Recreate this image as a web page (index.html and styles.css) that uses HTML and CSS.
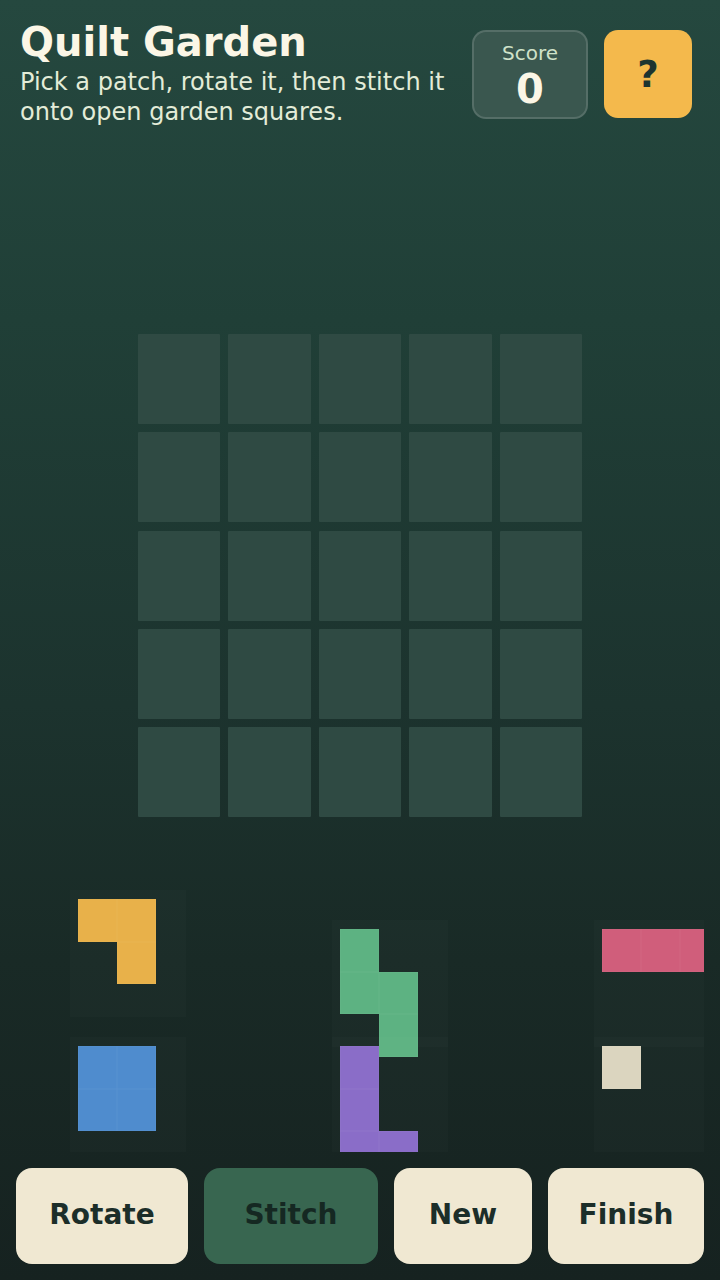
FILE: index.html
```html
<!DOCTYPE html>
<html lang="en">
<head>
<meta charset="utf-8">
<title>Quilt Garden</title>
<link rel="stylesheet" href="styles.css">
</head>
<body>
<div class="app">
  <header class="header">
    <div class="intro">
      <h1 class="title">Quilt Garden</h1>
      <p class="subtitle">Pick a patch, rotate it, then stitch it onto open garden squares.</p>
    </div>
    <div class="header-tools">
      <div class="score">
        <span class="score-label">Score</span>
        <span class="score-value">0</span>
      </div>
      <button class="help" type="button">?</button>
    </div>
  </header>

  <main class="board">
    <div class="cell"></div><div class="cell"></div><div class="cell"></div><div class="cell"></div><div class="cell"></div>
    <div class="cell"></div><div class="cell"></div><div class="cell"></div><div class="cell"></div><div class="cell"></div>
    <div class="cell"></div><div class="cell"></div><div class="cell"></div><div class="cell"></div><div class="cell"></div>
    <div class="cell"></div><div class="cell"></div><div class="cell"></div><div class="cell"></div><div class="cell"></div>
    <div class="cell"></div><div class="cell"></div><div class="cell"></div><div class="cell"></div><div class="cell"></div>
  </main>

  <section class="tray">
    <div class="tray-grid">
      <div class="slot">
        <div class="piece cols-2 yellow">
          <i class="on"></i><i class="on"></i>
          <i></i><i class="on"></i>
        </div>
      </div>
      <div class="slot slot-low">
        <div class="piece cols-2 green">
          <i class="on"></i><i></i>
          <i class="on"></i><i class="on"></i>
          <i></i><i class="on"></i>
        </div>
      </div>
      <div class="slot slot-low">
        <div class="piece cols-3 pink">
          <i class="on"></i><i class="on"></i><i class="on"></i>
        </div>
      </div>
      <div class="slot slot-short">
        <div class="piece cols-2 blue">
          <i class="on"></i><i class="on"></i>
          <i class="on"></i><i class="on"></i>
        </div>
      </div>
      <div class="slot slot-short">
        <div class="piece cols-2 purple">
          <i class="on"></i><i></i>
          <i class="on"></i><i></i>
          <i class="on"></i><i class="on"></i>
        </div>
      </div>
      <div class="slot slot-short">
        <div class="piece cols-1 cream">
          <i class="on"></i>
        </div>
      </div>
    </div>
  </section>

  <nav class="actions">
    <button class="btn" type="button">Rotate</button>
    <button class="btn btn-disabled" type="button">Stitch</button>
    <button class="btn" type="button">New</button>
    <button class="btn" type="button">Finish</button>
  </nav>
</div>
</body>
</html>
```
FILE: styles.css
```css
* { box-sizing: border-box; }

html, body {
  margin: 0;
  padding: 0;
}

body {
  width: 720px;
  height: 1280px;
  overflow: hidden;
  font-family: "DejaVu Sans", "Liberation Sans", sans-serif;
  color: #fbf5e4;
  background: linear-gradient(180deg, #25483f 0%, #203f37 25%, #1c332e 55%, #192a26 75%, #162220 100%);
}

.app {
  display: flex;
  flex-direction: column;
  height: 1280px;
}

/* Header */
.header {
  display: flex;
  justify-content: space-between;
  align-items: flex-start;
  gap: 16px;
  padding: 20px 28px 0 20px;
}

.intro {
  width: 436px;
}

.title {
  margin: 0;
  font-size: 40px;
  line-height: 44px;
  font-weight: bold;
  color: #fbf6e6;
}

.subtitle {
  margin: 3px 0 0;
  font-size: 24px;
  line-height: 30px;
  color: #e3ecd8;
}

.header-tools {
  display: flex;
  gap: 16px;
  margin-top: 10px;
}

.score {
  width: 116px;
  height: 89px;
  border: 2px solid rgba(255, 255, 255, 0.14);
  border-radius: 14px;
  background: #3a574f;
  display: flex;
  flex-direction: column;
  align-items: center;
  justify-content: center;
  padding-top: 3px;
}

.score-label {
  font-size: 20px;
  line-height: 24px;
  color: #cfe2c9;
}

.score-value {
  margin-top: 2px;
  font-size: 40px;
  line-height: 44px;
  font-weight: bold;
  color: #fbf6e6;
}

.help {
  width: 88px;
  height: 88px;
  border: none;
  border-radius: 14px;
  background: #f4b94c;
  color: #1d3430;
  font-family: "DejaVu Sans", sans-serif;
  font-size: 37px;
  font-weight: bold;
  padding: 0;
}

/* Board */
.board {
  align-self: center;
  margin-top: 207px;
  width: 444px;
  display: grid;
  grid-template-columns: repeat(5, 1fr);
  grid-template-rows: repeat(5, 90px);
  column-gap: 8px;
  row-gap: 8.25px;
}

.cell {
  background: #2f4a43;
  border-radius: 1px;
}

/* Tray */
.tray {
  margin: 33px 16px 0;
  height: 302px;
  overflow: hidden;
}

.tray-grid {
  display: grid;
  grid-template-columns: repeat(3, 116px);
  grid-template-rows: 147px 115px;
  column-gap: 146px;
  padding: 40px 0 0 54px;
}

.slot {
  height: 127px;
  padding: 9px 0 0 8px;
  background: rgba(255, 255, 255, 0.015);
}

.slot-low {
  margin-top: 30px;
}

.slot-short {
  height: 115px;
}

.piece {
  display: grid;
  grid-auto-rows: 42.5px;
}

.cols-1 { grid-template-columns: 39px; }
.cols-2 { grid-template-columns: repeat(2, 39px); }
.cols-3 { grid-template-columns: repeat(3, 39px); }

.piece i { display: block; }

.piece .on {
  box-shadow: inset 0 0 0 0.5px rgba(255, 255, 255, 0.06);
}

.yellow .on { background: #e8b14a; }
.green .on  { background: #5db282; }
.pink .on   { background: #d05e7b; }
.blue .on   { background: #4f8cce; }
.purple .on { background: #8a6dc8; }
.cream .on  { background: #dbd5bf; }

/* Actions */
.actions {
  display: grid;
  grid-template-columns: 172px 174px 138px 156px;
  column-gap: 16px;
  margin: 16px 16px 0;
  height: 96px;
}

.btn {
  border: none;
  border-radius: 16px;
  background: #f0e8d2;
  color: #1c2e29;
  font-family: "DejaVu Sans", sans-serif;
  font-size: 28px;
  font-weight: bold;
  padding: 0 0 4px;
}

.btn-disabled {
  background: #386650;
  color: #152822;
}
```
